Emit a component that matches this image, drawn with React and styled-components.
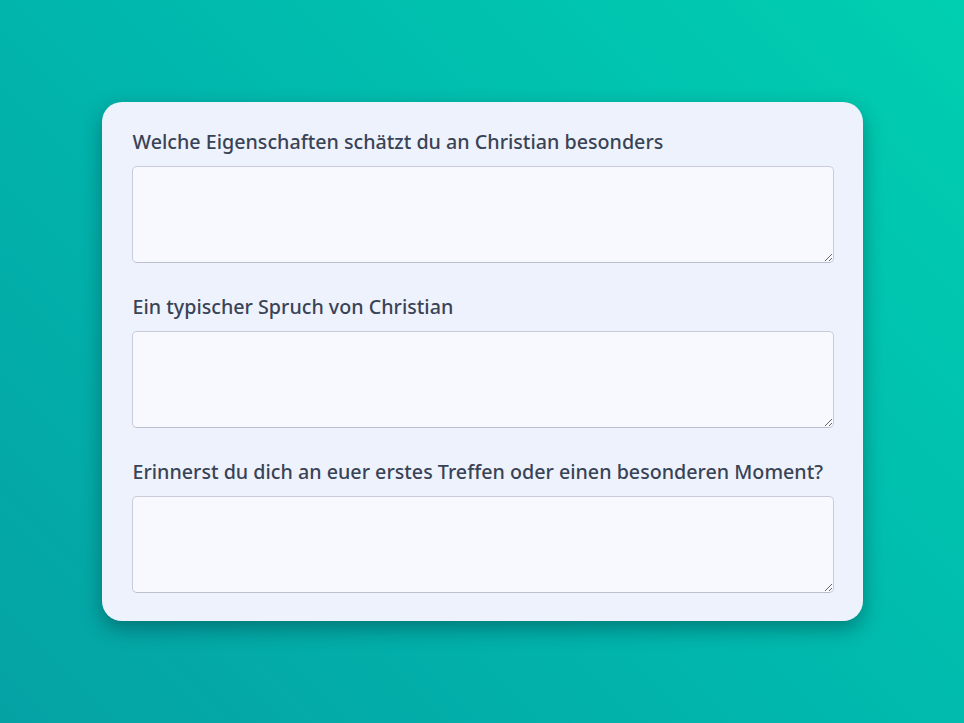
import React from 'react';
import styled, { createGlobalStyle } from 'styled-components';

const GlobalStyle = createGlobalStyle`
  html, body {
    margin: 0;
    padding: 0;
    height: 100%;
  }
  #root {
    min-height: 100vh;
  }
`;

const Page = styled.main`
  min-height: 100vh;
  display: flex;
  align-items: center;
  justify-content: center;
  background: linear-gradient(45deg, #05a2a4 0%, #00b8ad 50%, #00cfb1 100%);
  font-family: 'Noto Sans', 'DejaVu Sans', sans-serif;
`;

const Card = styled.form`
  width: 761px;
  box-sizing: border-box;
  padding: 30px 29px 28px 30px;
  background: #eef2fd;
  border-radius: 20px;
  box-shadow: 0 8px 20px rgba(0, 40, 50, 0.4);
  display: flex;
  flex-direction: column;
  gap: 34px;
`;

const Field = styled.div`
  display: flex;
  flex-direction: column;
  gap: 10px;
`;

const Label = styled.label`
  padding-left: 1px;
  font-size: 19.7px;
  line-height: 20px;
  padding-bottom: 4px;
  font-weight: 500;
  color: #394356;
`;

const TextArea = styled.textarea`
  display: block;
  width: 100%;
  height: 97px;
  box-sizing: border-box;
  margin: 0;
  padding: 8px 10px;
  border: 1px solid #c9cbd8;
  border-bottom-color: #bcbecd;
  border-radius: 5px;
  background: #f7f9ff;
  font-family: inherit;
  font-size: 16px;
  color: #394356;
  resize: vertical;
  outline: none;
`;

const questions = [
  { id: 'eigenschaften', label: 'Welche Eigenschaften schätzt du an Christian besonders' },
  { id: 'spruch', label: 'Ein typischer Spruch von Christian' },
  { id: 'moment', label: 'Erinnerst du dich an euer erstes Treffen oder einen besonderen Moment?' },
];

const App = () => {
  return (
    <>
      <GlobalStyle />
      <Page>
        <Card>
          {questions.map((q) => (
            <Field key={q.id}>
              <Label htmlFor={q.id}>{q.label}</Label>
              <TextArea id={q.id} />
            </Field>
          ))}
        </Card>
      </Page>
    </>
  );
};

export default App;
